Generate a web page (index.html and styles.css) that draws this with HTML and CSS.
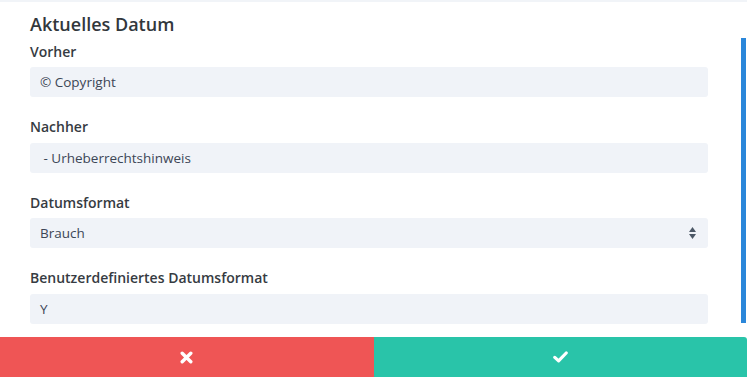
FILE: index.html
```html
<!DOCTYPE html>
<html>
  <head>
    <title>Aktuelles Datum</title>
    <link rel="stylesheet" href="styles.css">
  </head>
  <body>
    <div class="modal">
      <div class="panel">
        <div class="content">
          <h2 class="heading">Aktuelles Datum</h2>
          <div class="field">
            <label class="label">Vorher</label>
            <div class="input">© Copyright</div>
          </div>
          <div class="field">
            <label class="label">Nachher</label>
            <div class="input"> - Urheberrechtshinweis</div>
          </div>
          <div class="field">
            <label class="label">Datumsformat</label>
            <div class="input select">
              <span>Brauch</span>
              <svg class="arrows" width="7" height="12" viewBox="0 0 7 12">
                <path d="M3.5 0 L7 5 L0 5 Z" fill="#4c5866"/>
                <path d="M3.5 12 L7 7 L0 7 Z" fill="#4c5866"/>
              </svg>
            </div>
          </div>
          <div class="field">
            <label class="label">Benutzerdefiniertes Datumsformat</label>
            <div class="input">Y</div>
          </div>
        </div>
        <div class="scrollbar"></div>
      </div>
      <div class="actions">
        <div class="btn cancel">
          <svg width="13" height="13" viewBox="0 0 13 13">
            <path d="M2.2 2.2 L10.8 10.8 M10.8 2.2 L2.2 10.8" stroke="#fff" stroke-width="3.4" stroke-linecap="round"/>
          </svg>
        </div>
        <div class="btn save">
          <svg width="15" height="12" viewBox="0 0 15 12">
            <path d="M1.8 6.4 L5.6 9.9 L13.2 2" stroke="#fff" stroke-width="3.2" fill="none" stroke-linecap="round" stroke-linejoin="round"/>
          </svg>
        </div>
      </div>
    </div>
  </body>
</html>
```

FILE: styles.css
```css
body {margin: 0; background-color: #fff; font-family: "Open Sans", "Noto Sans", sans-serif;}
.modal {width: 747px; height: 377px; display: flex; flex-direction: column; border-top: 2px solid #f1f4f8; box-sizing: border-box;}
.panel {position: relative; flex: 1; min-height: 0; overflow: hidden;}
.content {padding: 10px 39px 0 30px;}
.heading {margin: 0 0 6px 0; font-size: 18px; line-height: 24px; font-weight: 600; color: #32373c;}
.field {margin-bottom: 20px;}
.label {display: block; font-size: 14px; line-height: 20px; font-weight: 600; color: #363b42; margin-bottom: 5.4px;}
.input {height: 30px; box-sizing: border-box; padding: 0 10px; background-color: #f0f3f8; border-radius: 3px; font-size: 13.5px; line-height: 30px; color: #3c4656; font-weight: 400; white-space: pre;}
.select {display: flex; justify-content: space-between; align-items: center;}
.arrows {margin-right: 2px;}
.scrollbar {position: absolute; left: 741px; top: 36px; width: 5px; height: 285px; background-color: #2b87da;}
.actions {display: flex; height: 40px;}
.btn {flex: 1; display: flex; align-items: center; justify-content: center;}
.cancel {background-color: #ef5555;}
.save {background-color: #29c4a9; border-top-right-radius: 3px;}
```
